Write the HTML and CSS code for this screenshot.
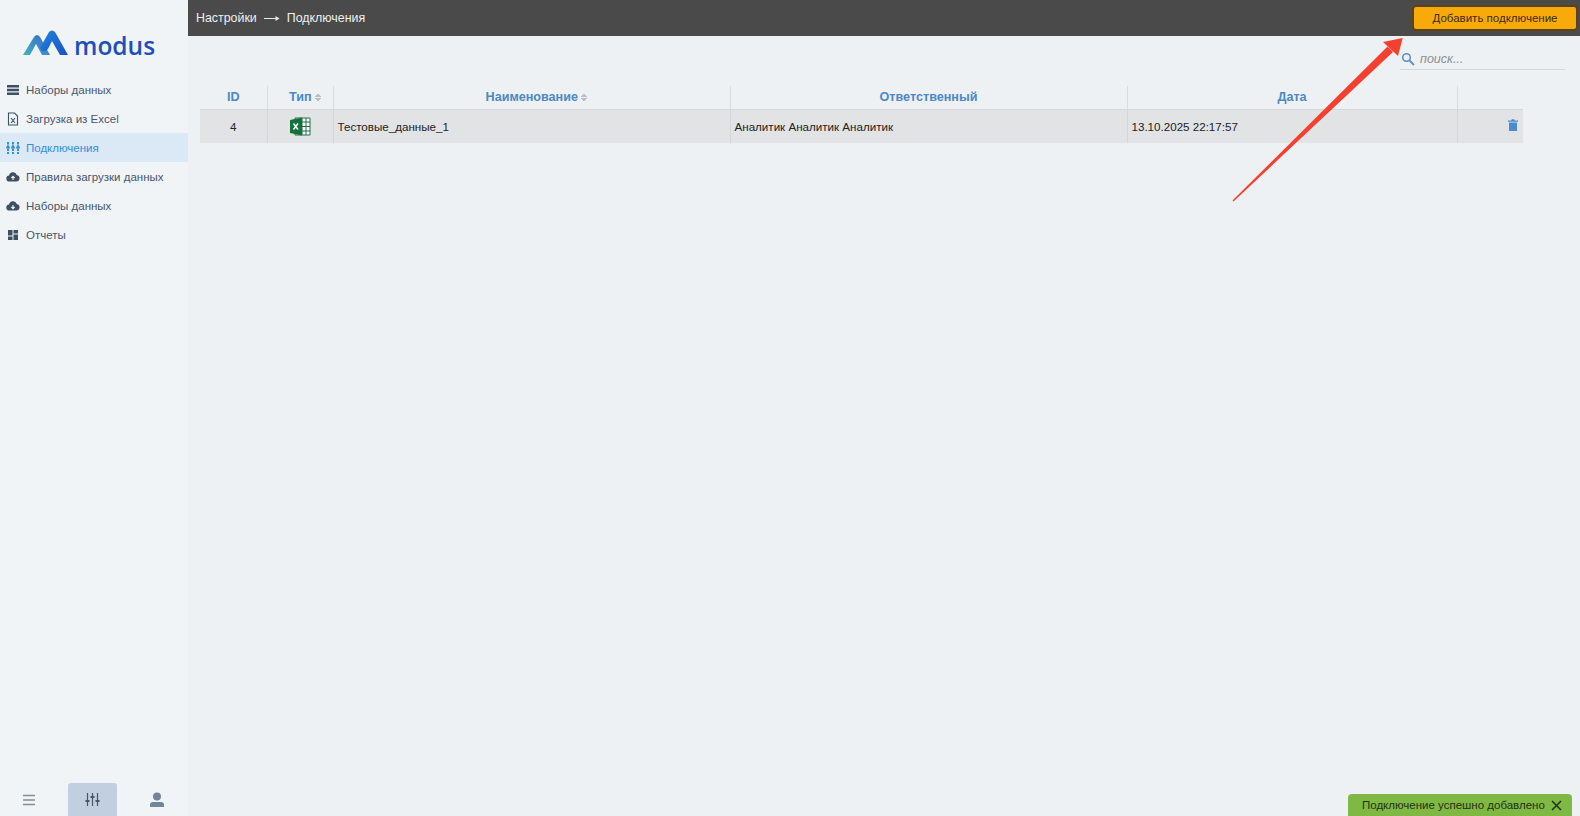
FILE: index.html
```html
<!DOCTYPE html>
<html lang="ru">
<head>
  <meta charset="UTF-8">
  <meta name="viewport" content="width=device-width, initial-scale=1.0">
  <title>Подключения</title>
  <link rel="stylesheet" href="styles.css">
</head>
<body>
  <div class="app">
    <!-- Sidebar -->
    <aside class="sidebar">
      <div class="logo">
        <svg class="logo-mark" width="50" height="28" viewBox="0 0 50 28">
          <defs>
            <linearGradient id="logoLeft" x1="0" y1="1" x2="1" y2="0">
              <stop offset="0" stop-color="#3fb6c4"/>
              <stop offset="1" stop-color="#3a62c8"/>
            </linearGradient>
            <linearGradient id="logoRight" x1="0" y1="0" x2="1" y2="1">
              <stop offset="0" stop-color="#1f86dc"/>
              <stop offset="1" stop-color="#1b4fc4"/>
            </linearGradient>
          </defs>
          <path d="M0 26 L11 8 Q14 4 17 8 L27 26 L19 26 L13 15 L7 26 Z" fill="url(#logoLeft)"/>
          <path d="M17 19 L26 3 Q29 0 32 3 L45 26 L37 26 L29 12 L25 20 Q22 23 19 22 Z" fill="url(#logoRight)"/>
        </svg>
        <span class="logo-text">modus</span>
      </div>

      <nav class="nav">
        <a class="nav-item">
          <svg class="nav-icon" viewBox="0 0 14 14"><path d="M1 2h12v2.400H1zM1 5.800h12v2.400H1zM1 9.600h12V12H1z" fill="#3d4f63"/></svg>
          Наборы данных
        </a>
        <a class="nav-item">
          <svg class="nav-icon" viewBox="0 0 14 14"><path d="M2.500 1h6l3 3v9h-9z" fill="none" stroke="#3d4f63" stroke-width="1.100"/><path d="M5 6l4 5M9 6l-4 5" stroke="#3d4f63" stroke-width="1.100"/></svg>
          Загрузка из Excel
        </a>
        <a class="nav-item active">
          <svg class="nav-icon" viewBox="0 0 14 14"><path d="M2 1v12M7 1v12M12 1v12" stroke="#2f8fdc" stroke-width="2" stroke-dasharray="2.500 .8"/><path d="M.2 6.500h3.600M5.200 6.500h3.600M10.200 6.500h3.600" stroke="#2f8fdc" stroke-width="2"/></svg>
          Подключения
        </a>
        <a class="nav-item">
          <svg class="nav-icon" viewBox="0 0 14 14"><path d="M3.500 11.500a3 3 0 0 1-.4-6A4 4 0 0 1 10.800 5a3.300 3.300 0 0 1 0 6.500z" fill="#3d4f63"/><path d="M7 10V6.500M5.400 8L7 6.300 8.600 8" fill="none" stroke="#f1f4f7" stroke-width="1.100"/></svg>
          Правила загрузки данных
        </a>
        <a class="nav-item">
          <svg class="nav-icon" viewBox="0 0 14 14"><path d="M3.500 11.500a3 3 0 0 1-.4-6A4 4 0 0 1 10.800 5a3.300 3.300 0 0 1 0 6.500z" fill="#3d4f63"/><path d="M7 6v3.500M5.400 8L7 9.700 8.600 8" fill="none" stroke="#f1f4f7" stroke-width="1.100"/></svg>
          Наборы данных
        </a>
        <a class="nav-item">
          <svg class="nav-icon" viewBox="0 0 14 14"><path d="M2 2h4.500v5.500H2zM7.500 2H12v3.500H7.500zM7.500 6.500H12V12H7.500zM2 8.500h4.500V12H2z" fill="#3d4f63"/></svg>
          Отчеты
        </a>
      </nav>

      <div class="side-tabs">
        <div class="side-tab">
          <svg width="14" height="12" viewBox="0 0 14 12"><path d="M1 1.500h12M1 6h12M1 10.500h12" stroke="#7f8d9d" stroke-width="1.300"/></svg>
        </div>
        <div class="side-tab selected">
          <svg width="15" height="13" viewBox="0 0 15 13"><path d="M2.500 0v13M7.500 0v13M12.500 0v13" stroke="#46566a" stroke-width="1.200"/><path d="M.5 8h4M5.500 4h4M10.500 8h4" stroke="#46566a" stroke-width="2"/></svg>
        </div>
        <div class="side-tab">
          <svg width="16" height="15" viewBox="0 0 16 15"><circle cx="8" cy="4.500" r="4" fill="#71859b"/><path d="M1 15v-2.500Q1 10 4 10h8q3 0 3 2.500V15z" fill="#71859b"/></svg>
        </div>
      </div>
    </aside>

    <!-- Main part -->
    <main class="main">
      <header class="topbar">
        <div class="crumbs">
          <span>Настройки</span>
          <svg width="16" height="7" viewBox="0 0 16 7"><path d="M0 3.500h14" stroke="#e8e8e8" stroke-width="1"/><path d="M11.500 1L15.500 3.500 11.500 6z" fill="#e8e8e8"/></svg>
          <span>Подключения</span>
        </div>
        <button class="add-btn">Добавить подключение</button>
      </header>

      <div class="search-row">
        <div class="search">
          <svg width="14" height="14" viewBox="0 0 14 14"><circle cx="5.500" cy="5.500" r="3.800" fill="none" stroke="#5b8fc9" stroke-width="1.600"/><path d="M8.500 8.500L13 13" stroke="#5b8fc9" stroke-width="1.800"/></svg>
          <span class="search-hint">поиск...</span>
        </div>
      </div>

      <div class="table-wrap">
        <table class="grid">
          <colgroup>
            <col class="col-id">
            <col class="col-type">
            <col class="col-name">
            <col class="col-owner">
            <col class="col-date">
            <col>
          </colgroup>
          <thead>
            <tr>
              <th>ID</th>
              <th class="sortable">Тип <span class="sort"></span></th>
              <th class="sortable">Наименование <span class="sort"></span></th>
              <th>Ответственный</th>
              <th>Дата</th>
              <th></th>
            </tr>
          </thead>
          <tbody>
            <tr>
              <td class="center">4</td>
              <td class="center">
                <svg class="excel" width="21" height="19" viewBox="0 0 21 19">
                  <path d="M5 1h15v17H5z" fill="#fff" stroke="#1d7044" stroke-width="1"/>
                  <path d="M12 1v17M16 1v17M12 5h8M12 9.500h8M12 14h8" stroke="#1d7044" stroke-width="1"/>
                  <path d="M0 3l12-2.500v18L0 16z" fill="#16713f"/>
                  <path d="M3.500 6.500L8 12.500M8 6.500L3.500 12.500" stroke="#fff" stroke-width="1.500"/>
                </svg>
              </td>
              <td>Тестовые_данные_1</td>
              <td>Аналитик Аналитик Аналитик</td>
              <td>13.10.2025 22:17:57</td>
              <td class="actions">
                <svg width="10" height="12" viewBox="0 0 10 12"><path d="M0 1.500h3.200L3.800.300h2.400l.6 1.200H10v1.300H0zM1 3.500h8V12H1z" fill="#4a8bcb"/></svg>
              </td>
            </tr>
          </tbody>
        </table>
      </div>
    </main>
  </div>

  <!-- Annotation arrow -->
  <svg class="arrow" width="190" height="180" viewBox="0 0 190 180">
    <path d="M10.500 168.500L165.500 14.500 171 20 11.500 169.500Z" fill="#f4402f"/>
    <path d="M180.700 6L161 10 176 24Z" fill="#f4402f"/>
  </svg>

  <div class="toast">
    <span>Подключение успешно добавлено</span>
    <svg width="11" height="11" viewBox="0 0 11 11"><path d="M1 1l9 9M10 1l-9 9" stroke="#1f3315" stroke-width="1.500"/></svg>
  </div>
</body>
</html>
```

FILE: styles.css
```css
* {
  box-sizing: border-box;
}

html, body {
  height: 100%;
}

body {
  margin: 0;
  font-family: "Liberation Sans", Arial, sans-serif;
  background-color: #eef1f3;
  overflow: hidden;
}

.app {
  display: flex;
  height: 100vh;
}

/* Sidebar */
.sidebar {
  display: flex;
  flex-direction: column;
  flex: 0 0 188px;
  background-color: #f1f4f7;
}

.logo {
  display: flex;
  align-items: flex-end;
  height: 60px;
  padding-left: 23px;
}

.logo-mark {
  margin-bottom: 3px;
}

.logo-text {
  margin-left: 1px;
  font-family: "Open Sans", sans-serif;
  font-size: 24.5px;
  font-weight: 600;
  line-height: 28px;
  color: #1f50b8;
}

.nav {
  display: flex;
  flex-direction: column;
  margin-top: 15px;
}

.nav-item {
  display: flex;
  align-items: center;
  gap: 6px;
  height: 29px;
  padding-left: 6px;
  font-size: 11.5px;
  color: #47566a;
}

.nav-item.active {
  background-color: #dbe8f5;
  color: #2f8fdc;
}

.nav-icon {
  width: 14px;
  height: 14px;
  flex: none;
}

.side-tabs {
  display: flex;
  gap: 15px;
  margin-top: auto;
  padding-left: 4px;
}

.side-tab {
  display: flex;
  align-items: center;
  justify-content: center;
  width: 49px;
  height: 33px;
  border-radius: 3px 3px 0 0;
}

.side-tab.selected {
  background-color: #c1cfdf;
}

/* Top bar */
.main {
  flex: 1;
  display: flex;
  flex-direction: column;
  min-width: 0;
}

.topbar {
  display: flex;
  align-items: center;
  justify-content: space-between;
  height: 36px;
  padding: 0 2px 0 8px;
  background-color: #4a4a4a;
}

.crumbs {
  display: flex;
  align-items: center;
  gap: 7px;
  font-size: 12.4px;
  color: #f0f0f0;
}

.add-btn {
  width: 166px;
  height: 26px;
  padding: 0;
  font-family: inherit;
  font-size: 11.5px;
  color: #3a2a05;
  background-color: #f9aa0b;
  border: 2px solid #5c4214;
  border-radius: 4px;
  cursor: pointer;
}

/* Search */
.search-row {
  display: flex;
  justify-content: flex-end;
  padding: 15px 15px 0 0;
}

.search {
  display: flex;
  align-items: center;
  gap: 5px;
  width: 165px;
  height: 19px;
  padding: 0 0 3px 1px;
  border-bottom: 1px solid #d3d8de;
}

.search-hint {
  font-size: 12.5px;
  font-style: italic;
  color: #8a8f96;
}

/* Table */
.table-wrap {
  padding: 16px 57px 0 12px;
}

.grid {
  width: 100%;
  border-collapse: collapse;
  table-layout: fixed;
  font-size: 11.6px;
}

.col-id { width: 67px; }
.col-type { width: 66px; }
.col-name { width: 397px; }
.col-owner { width: 397px; }
.col-date { width: 330px; }

.grid th {
  height: 23px;
  padding: 0;
  font-size: 12.6px;
  font-weight: bold;
  color: #4c88c6;
  border-left: 1px solid #d9dde2;
  border-bottom: 1px solid #d3d6da;
}

.grid th.sortable {
  padding-left: 10px;
}

.grid th:first-child,
.grid td:first-child {
  border-left: none;
}

.grid td {
  height: 34px;
  padding: 0 4px;
  color: #222;
  background-color: #e1e3e5;
  border-left: 1px solid #d4d7da;
}

.grid td.center {
  text-align: center;
}

.grid td.actions {
  padding-right: 5px;
  text-align: right;
}

.excel {
  display: inline-block;
  vertical-align: middle;
}

.sort {
  display: inline-block;
  width: 6px;
  height: 9px;
  vertical-align: -1px;
  background:
    linear-gradient(to bottom right, transparent 50%, #b4bfcb 50%) left top / 50% 4px no-repeat,
    linear-gradient(to bottom left, transparent 50%, #b4bfcb 50%) right top / 50% 4px no-repeat,
    linear-gradient(to top right, transparent 50%, #b4bfcb 50%) left bottom / 50% 4px no-repeat,
    linear-gradient(to top left, transparent 50%, #b4bfcb 50%) right bottom / 50% 4px no-repeat;
}

/* Things lying over the page */
.arrow {
  position: absolute;
  left: 1222px;
  top: 32px;
}

.toast {
  position: absolute;
  right: 8px;
  bottom: 0;
  display: flex;
  align-items: center;
  gap: 6px;
  width: 224px;
  height: 22px;
  padding: 0 6px 0 14px;
  font-size: 11.5px;
  color: #1f3315;
  background-color: #7fb843;
  border-radius: 4px 4px 0 0;
}
```
